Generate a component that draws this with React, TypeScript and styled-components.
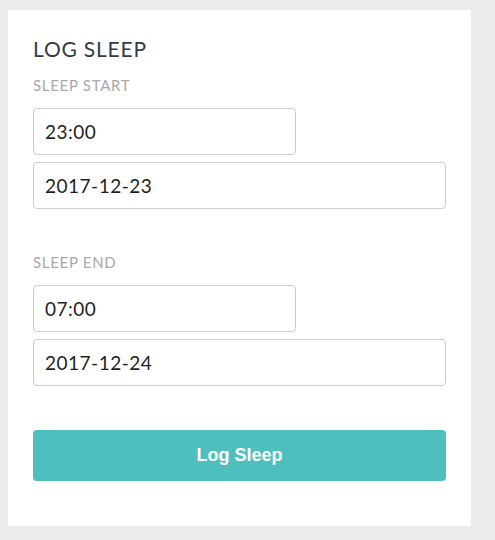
import React from "react";
import styled, { createGlobalStyle } from "styled-components";

const Global = createGlobalStyle`
  html, body {
    margin: 0;
    padding: 0;
    background: #ebebeb;
  }
  body {
    padding: 10px 8px;
    font-family: Lato, "Open Sans", sans-serif;
  }
`;

const Card = styled.form`
  width: 463px;
  box-sizing: border-box;
  background: #ffffff;
  padding: 26px 25px 45px 25px;
  display: flex;
  flex-direction: column;
`;

const Title = styled.h2`
  margin: 0;
  font-family: Lato, sans-serif;
  font-weight: 400;
  font-size: 21px;
  line-height: 25px;
  letter-spacing: 0.8px;
  color: #333c46;
`;

const Label = styled.div<{ $top: number }>`
  margin-top: ${(p) => p.$top}px;
  font-family: Lato, sans-serif;
  font-size: 15px;
  line-height: 18px;
  letter-spacing: 0.7px;
  color: #a8a8ad;
  text-transform: uppercase;
`;

const Fields = styled.div`
  margin-top: 14px;
  display: flex;
  flex-direction: column;
  gap: 7px;
`;

const Input = styled.input<{ $wide?: boolean }>`
  box-sizing: border-box;
  width: ${(p) => (p.$wide ? "413px" : "263px")};
  height: 47px;
  border: 1px solid #cccccc;
  border-radius: 4px;
  padding: 0 11px;
  font-family: Lato, sans-serif;
  font-size: 19px;
  letter-spacing: 0.5px;
  color: #1f1f1f;
  background: #fff;
  outline: none;
`;

const Button = styled.button`
  margin-top: 44px;
  width: 413px;
  height: 51px;
  border: none;
  border-radius: 4px;
  background: #4ebfbf;
  color: #ffffff;
  font-family: "Liberation Sans", Arial, sans-serif;
  font-weight: 700;
  font-size: 18px;
  cursor: pointer;
`;

export default function App() {
  return (
    <>
      <Global />
      <Card onSubmit={(e) => e.preventDefault()}>
        <Title>LOG SLEEP</Title>
        <Label $top={15}>Sleep Start</Label>
        <Fields>
          <Input defaultValue="23:00" />
          <Input $wide defaultValue="2017-12-23" />
        </Fields>
        <Label $top={44}>Sleep End</Label>
        <Fields>
          <Input defaultValue="07:00" />
          <Input $wide defaultValue="2017-12-24" />
        </Fields>
        <Button type="submit">Log Sleep</Button>
      </Card>
    </>
  );
}
